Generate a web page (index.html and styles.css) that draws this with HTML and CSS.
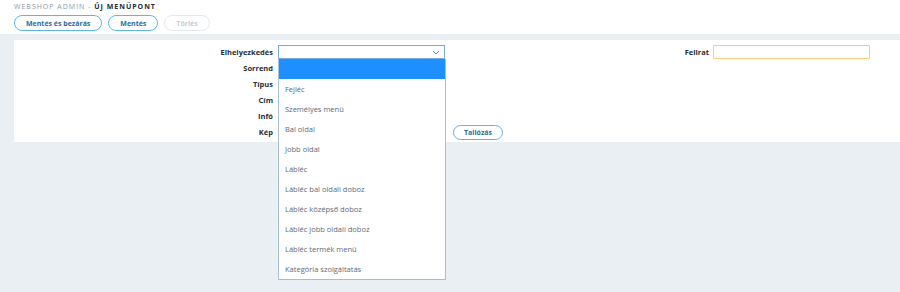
FILE: index.html
```html
<!DOCTYPE html>
<html lang="hu">

<head>
    <meta charset="UTF-8">
    <meta name="viewport" content="width=device-width, initial-scale=1.0">
    <title>Új menüpont</title>
    <link rel="stylesheet" href="styles.css">
</head>

<body>
    <div class="header">
        <div class="crumb"><span class="crumb-app">Webshop admin -</span> <span class="crumb-page">Új menüpont</span></div>
        <div class="toolbar">
            <button class="pill-btn">Mentés és bezárás</button>
            <button class="pill-btn">Mentés</button>
            <button class="pill-btn disabled">Törlés</button>
        </div>
    </div>

    <div class="main">
        <div class="panel">
            <div class="col col-left">
                <div class="row">
                    <label>Elhelyezkedés</label>
                    <div class="select-wrap">
                        <div class="select">
                            <svg class="chevron" width="8" height="5" viewBox="0 0 8 5">
                                <path d="M1 1 L4 4 L7 1" fill="none" stroke="#5a8fc8" stroke-width="1"/>
                            </svg>
                        </div>
                        <!-- nyitott lenyíló lista -->
                        <ul class="dropdown">
                            <li class="active"></li>
                            <li>Fejléc</li>
                            <li>Személyes menü</li>
                            <li>Bal oldal</li>
                            <li>Jobb oldal</li>
                            <li>Lábléc</li>
                            <li>Lábléc bal oldali doboz</li>
                            <li>Lábléc középső doboz</li>
                            <li>Lábléc jobb oldali doboz</li>
                            <li>Lábléc termék menü</li>
                            <li>Kategória szolgáltatás</li>
                        </ul>
                    </div>
                </div>
                <div class="row"><label>Sorrend</label><div class="field"></div></div>
                <div class="row"><label>Típus</label><div class="field"></div></div>
                <div class="row"><label>Cím</label><div class="field"></div></div>
                <div class="row"><label>Infó</label><div class="field"></div></div>
                <div class="row">
                    <label>Kép</label>
                    <div class="field file-field">
                        <div class="file-name"></div>
                        <button class="pill-btn small">Tallózás</button>
                    </div>
                </div>
            </div>
            <div class="col col-right">
                <div class="row">
                    <label>Felirat</label>
                    <input type="text" class="text-input">
                </div>
            </div>
        </div>
    </div>
</body>

</html>
```

FILE: styles.css
```css
body {
    font-family: "Open Sans", "Liberation Sans", sans-serif;
    background-color: #eaeff3;
    margin: 0;
    padding: 0;
    min-height: 292px;
}

.header {
    background-color: #fff;
    padding: 2px 14px 3px;
}

.crumb {
    font-size: 7px;
    line-height: 10px;
    letter-spacing: 1px;
    text-transform: uppercase;
}

.crumb-app {
    color: #8d9aa6;
}

.crumb-page {
    color: #1d2b38;
    font-weight: bold;
}

.toolbar {
    display: flex;
    gap: 6px;
    margin-top: 3px;
}

.pill-btn {
    font-family: inherit;
    font-size: 7px;
    font-weight: bold;
    color: #2c6c98;
    background-color: #fff;
    border: 1px solid #5fb6e3;
    border-radius: 9px;
    height: 16px;
    padding: 0 11px;
    cursor: pointer;
}

.pill-btn.disabled {
    color: #c6ced6;
    border-color: #e3e8ed;
}

.main {
    padding: 6px 0 0 14px;
}

.panel {
    background-color: #fff;
    display: flex;
    padding: 5px 0 1px;
}

.col-left {
    width: 443px;
}

.col-right {
    flex: 1;
}

.row {
    display: flex;
    height: 16px;
}

.row label {
    font-size: 7.5px;
    font-weight: bold;
    color: #1f2d3a;
    line-height: 14px;
    text-align: right;
}

.col-left .row label {
    width: 259px;
    margin-right: 5px;
}

.col-right .row label {
    width: 252px;
    margin-right: 4px;
}

.select-wrap {
    position: relative;
}

.select {
    width: 161px;
    height: 12px;
    border: 1px solid #7ca9dc;
    display: flex;
    justify-content: flex-end;
    align-items: center;
    padding-right: 4px;
    box-sizing: content-box;
}

.dropdown {
    position: absolute;
    top: 14px;
    left: 0;
    width: 166px;
    margin: 0;
    padding: 0;
    list-style: none;
    background-color: #fff;
    border: 1px solid #a5bedc;
    border-top: none;
    z-index: 5;
}

.dropdown li {
    height: 20px;
    line-height: 20px;
    padding-left: 6px;
    font-size: 7.5px;
    color: #5b6a79;
}

.dropdown li.active {
    background-color: #1e8fff;
}

.field {
    width: 168px;
}

.file-field {
    display: flex;
    gap: 7px;
}

.file-name {
    width: 168px;
    flex-shrink: 0;
}

.pill-btn.small {
    height: 15px;
    padding: 0 10px;
}

.text-input {
    width: 157px;
    height: 14px;
    box-sizing: border-box;
    border: 1px solid #f7cf7c;
    border-radius: 1px;
    padding: 0;
    outline: none;
}
```
